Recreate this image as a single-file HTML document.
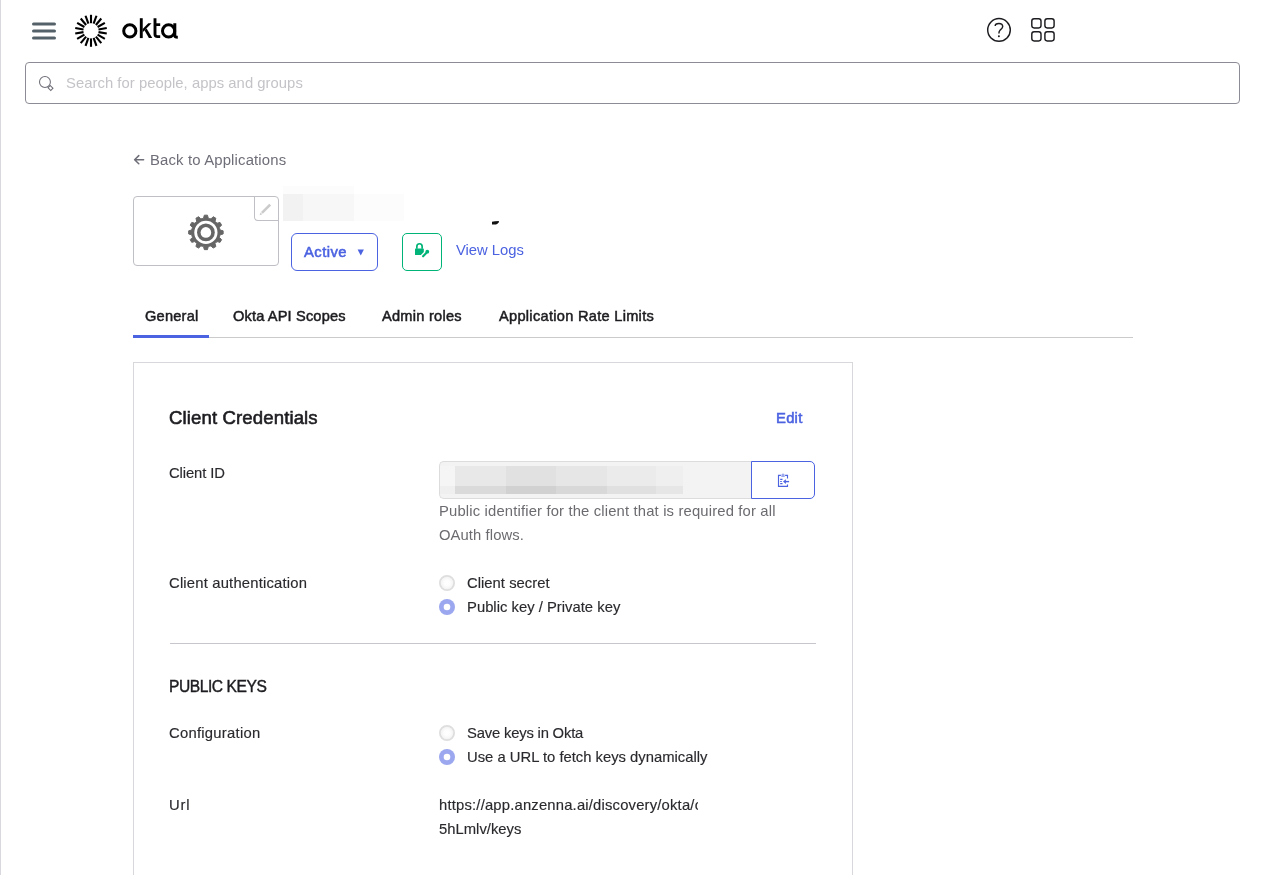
<!DOCTYPE html>
<html><head><meta charset="utf-8"><title>Okta - Application</title>
<style>
html,body{margin:0;padding:0;background:#fff;}
body{width:1264px;height:875px;overflow:hidden;position:relative;font-family:"Liberation Sans", sans-serif;}
.t{position:absolute;white-space:nowrap;will-change:transform;}
svg.ic{position:absolute;left:0;top:0;width:1264px;height:875px;pointer-events:none;}
</style></head><body>
<div style="position:absolute;left:0px;top:0px;width:1px;height:875px;background:#d8d8de"></div>
<div style="position:absolute;left:25px;top:62px;width:1215px;height:42px;box-sizing:border-box;border:1px solid #8c8c96;border-radius:4px;background:#fff"></div>
<div style="position:absolute;left:133px;top:196px;width:146px;height:70px;box-sizing:border-box;border:1px solid #bfbfc6;border-radius:4px;background:#fff"></div>
<div style="position:absolute;left:254px;top:197px;width:24px;height:24px;box-sizing:border-box;border:1px solid #bfbfc6;border-top:none;border-right:none;border-bottom-left-radius:4px;background:transparent"></div>
<div style="position:absolute;left:283px;top:186px;width:71px;height:8px;background:#fcfcfc"></div>
<div style="position:absolute;left:283px;top:194px;width:20px;height:27px;background:#f2f2f2"></div>
<div style="position:absolute;left:303px;top:194px;width:51px;height:27px;background:#f7f7f7"></div>
<div style="position:absolute;left:354px;top:194px;width:50px;height:27px;background:#fcfcfc"></div>
<div style="position:absolute;left:291px;top:233px;width:87px;height:38px;box-sizing:border-box;border:1px solid #4b62e1;border-radius:6px;background:#fff"></div>
<div style="position:absolute;left:402px;top:233px;width:40px;height:38px;box-sizing:border-box;border:1px solid #00b378;border-radius:5px;background:#fff"></div>
<div style="position:absolute;left:133px;top:337px;width:1000px;height:1px;background:#cbcbcb"></div>
<div style="position:absolute;left:133px;top:335px;width:76px;height:3px;background:#4b62e1"></div>
<div style="position:absolute;left:133px;top:362px;width:720px;height:600px;box-sizing:border-box;border:1px solid #d7d7dc;background:#fff"></div>
<div style="position:absolute;left:439px;top:461px;width:313px;height:38px;box-sizing:border-box;border:1px solid #dcdcdc;border-right:none;border-radius:5px 0 0 5px;background:#f3f3f3"></div>
<div style="position:absolute;left:440px;top:466px;width:15px;height:20px;background:#f5f5f5"></div>
<div style="position:absolute;left:440px;top:486px;width:15px;height:8px;background:#efefef"></div>
<div style="position:absolute;left:455px;top:466px;width:51px;height:20px;background:#e8e8e8"></div>
<div style="position:absolute;left:455px;top:486px;width:51px;height:8px;background:#dadada"></div>
<div style="position:absolute;left:506px;top:466px;width:50px;height:20px;background:#e1e1e1"></div>
<div style="position:absolute;left:506px;top:486px;width:50px;height:8px;background:#d1d1d1"></div>
<div style="position:absolute;left:556px;top:466px;width:51px;height:20px;background:#e6e6e6"></div>
<div style="position:absolute;left:556px;top:486px;width:51px;height:8px;background:#d8d8d8"></div>
<div style="position:absolute;left:607px;top:466px;width:49px;height:20px;background:#ebebeb"></div>
<div style="position:absolute;left:607px;top:486px;width:49px;height:8px;background:#e0e0e0"></div>
<div style="position:absolute;left:656px;top:466px;width:27px;height:20px;background:#efefef"></div>
<div style="position:absolute;left:656px;top:486px;width:27px;height:8px;background:#e6e6e6"></div>
<div style="position:absolute;left:751px;top:461px;width:64px;height:38px;box-sizing:border-box;border:1px solid #4b62e1;border-radius:0 5px 5px 0;background:#fff"></div>
<div style="position:absolute;left:170px;top:643px;width:646px;height:1px;background:#c6c6cc"></div>
<div class="t" style="left:65.58px;top:76px;font-size:14.8px;line-height:14.8px;font-weight:400;color:#c4c4c8;letter-spacing:0.046px;">Search for people, apps and groups</div>
<div class="t" style="left:149.56px;top:153px;font-size:14.9px;line-height:14.9px;font-weight:400;color:#6e6e78;letter-spacing:0.15px;">Back to Applications</div>
<div class="t" style="left:303.88px;top:245px;font-size:14.8px;line-height:14.8px;font-weight:400;color:#4b62e1;letter-spacing:0.431px;-webkit-text-stroke:0.55px #4b62e1;">Active</div>
<div class="t" style="left:455.51px;top:243px;font-size:14.8px;line-height:14.8px;font-weight:400;color:#4b62e1;letter-spacing:-0.012px;">View Logs</div>
<div class="t" style="left:144.68px;top:309px;font-size:14.6px;line-height:14.6px;font-weight:400;color:#1d1d21;letter-spacing:0.224px;-webkit-text-stroke:0.5px #1d1d21;">General</div>
<div class="t" style="left:233.32px;top:309px;font-size:14.6px;line-height:14.6px;font-weight:400;color:#1d1d21;letter-spacing:0.153px;-webkit-text-stroke:0.5px #1d1d21;">Okta API Scopes</div>
<div class="t" style="left:382.09px;top:309px;font-size:14.6px;line-height:14.6px;font-weight:400;color:#1d1d21;letter-spacing:0.251px;-webkit-text-stroke:0.5px #1d1d21;">Admin roles</div>
<div class="t" style="left:498.69px;top:309px;font-size:14.6px;line-height:14.6px;font-weight:400;color:#1d1d21;letter-spacing:0.289px;-webkit-text-stroke:0.5px #1d1d21;">Application Rate Limits</div>
<div class="t" style="left:169.46px;top:409px;font-size:18.6px;line-height:18.6px;font-weight:400;color:#1d1d21;letter-spacing:0.111px;-webkit-text-stroke:0.6px #1d1d21;">Client Credentials</div>
<div class="t" style="left:775.95px;top:411px;font-size:14.8px;line-height:14.8px;font-weight:400;color:#4b62e1;letter-spacing:0.256px;-webkit-text-stroke:0.55px #4b62e1;">Edit</div>
<div class="t" style="left:169.43px;top:466px;font-size:14.8px;line-height:14.8px;font-weight:400;color:#2a2a2e;letter-spacing:-0.092px;-webkit-text-stroke:0.15px #2a2a2e;">Client ID</div>
<div class="t" style="left:438.56px;top:504px;font-size:14.8px;line-height:14.8px;font-weight:400;color:#6b6b70;letter-spacing:0.163px;">Public identifier for the client that is required for all</div>
<div class="t" style="left:439.05px;top:528px;font-size:14.8px;line-height:14.8px;font-weight:400;color:#6b6b70;letter-spacing:0.086px;">OAuth flows.</div>
<div class="t" style="left:169.43px;top:576px;font-size:14.8px;line-height:14.8px;font-weight:400;color:#2a2a2e;letter-spacing:0.19px;-webkit-text-stroke:0.15px #2a2a2e;">Client authentication</div>
<div class="t" style="left:467.13px;top:576px;font-size:14.8px;line-height:14.8px;font-weight:400;color:#2a2a2e;letter-spacing:0.031px;-webkit-text-stroke:0.15px #2a2a2e;">Client secret</div>
<div class="t" style="left:466.60px;top:600px;font-size:14.8px;line-height:14.8px;font-weight:400;color:#2a2a2e;letter-spacing:0.014px;-webkit-text-stroke:0.15px #2a2a2e;">Public key / Private key</div>
<div class="t" style="left:168.95px;top:679px;font-size:15.6px;line-height:15.6px;font-weight:400;color:#1d1d21;letter-spacing:-0.446px;-webkit-text-stroke:0.4px #1d1d21;">PUBLIC KEYS</div>
<div class="t" style="left:168.63px;top:726px;font-size:14.8px;line-height:14.8px;font-weight:400;color:#2a2a2e;letter-spacing:0.262px;-webkit-text-stroke:0.15px #2a2a2e;">Configuration</div>
<div class="t" style="left:467.07px;top:726px;font-size:14.8px;line-height:14.8px;font-weight:400;color:#2a2a2e;letter-spacing:-0.185px;-webkit-text-stroke:0.15px #2a2a2e;">Save keys in Okta</div>
<div class="t" style="left:466.76px;top:750px;font-size:14.8px;line-height:14.8px;font-weight:400;color:#2a2a2e;letter-spacing:0.0px;-webkit-text-stroke:0.15px #2a2a2e;">Use a URL to fetch keys dynamically</div>
<div class="t" style="left:168.86px;top:798px;font-size:14.8px;line-height:14.8px;font-weight:400;color:#2a2a2e;letter-spacing:0.767px;-webkit-text-stroke:0.15px #2a2a2e;">Url</div>
<div class="t" style="left:438.65px;top:798px;font-size:14.8px;line-height:14.8px;font-weight:400;color:#2a2a2e;letter-spacing:0.19px;-webkit-text-stroke:0.15px #2a2a2e;width:259.35px;overflow:hidden;">https://app.anzenna.ai/discovery/okta/client</div>
<div class="t" style="left:438.84px;top:822px;font-size:14.8px;line-height:14.8px;font-weight:400;color:#2a2a2e;letter-spacing:0.018px;-webkit-text-stroke:0.15px #2a2a2e;">5hLmlv/keys</div>
<svg class="ic" width="1264" height="875" viewBox="0 0 1264 875">
<defs><radialGradient id="rg"><stop offset="0" stop-color="#ffffff"/><stop offset="0.4" stop-color="#fdfdfd"/><stop offset="1" stop-color="#f0f0f0"/></radialGradient></defs>
<line x1="33.5" y1="24" x2="54.5" y2="24" stroke="#546168" stroke-width="3" stroke-linecap="round"/>
<line x1="33.5" y1="31" x2="54.5" y2="31" stroke="#546168" stroke-width="3" stroke-linecap="round"/>
<line x1="33.5" y1="38" x2="54.5" y2="38" stroke="#546168" stroke-width="3" stroke-linecap="round"/>
<line x1="91.00" y1="23.20" x2="91.00" y2="14.80" stroke="#000" stroke-width="2.1"/>
<line x1="93.60" y1="23.66" x2="96.47" y2="15.76" stroke="#000" stroke-width="2.1"/>
<line x1="95.89" y1="24.98" x2="101.28" y2="18.54" stroke="#000" stroke-width="2.1"/>
<line x1="97.58" y1="27.00" x2="104.86" y2="22.80" stroke="#000" stroke-width="2.1"/>
<line x1="98.48" y1="29.48" x2="106.76" y2="28.02" stroke="#000" stroke-width="2.1"/>
<line x1="98.48" y1="32.12" x2="106.76" y2="33.58" stroke="#000" stroke-width="2.1"/>
<line x1="97.58" y1="34.60" x2="104.86" y2="38.80" stroke="#000" stroke-width="2.1"/>
<line x1="95.89" y1="36.62" x2="101.28" y2="43.06" stroke="#000" stroke-width="2.1"/>
<line x1="93.60" y1="37.94" x2="96.47" y2="45.84" stroke="#000" stroke-width="2.1"/>
<line x1="91.00" y1="38.40" x2="91.00" y2="46.80" stroke="#000" stroke-width="2.1"/>
<line x1="88.40" y1="37.94" x2="85.53" y2="45.84" stroke="#000" stroke-width="2.1"/>
<line x1="86.11" y1="36.62" x2="80.72" y2="43.06" stroke="#000" stroke-width="2.1"/>
<line x1="84.42" y1="34.60" x2="77.14" y2="38.80" stroke="#000" stroke-width="2.1"/>
<line x1="83.52" y1="32.12" x2="75.24" y2="33.58" stroke="#000" stroke-width="2.1"/>
<line x1="83.52" y1="29.48" x2="75.24" y2="28.02" stroke="#000" stroke-width="2.1"/>
<line x1="84.42" y1="27.00" x2="77.14" y2="22.80" stroke="#000" stroke-width="2.1"/>
<line x1="86.11" y1="24.98" x2="80.72" y2="18.54" stroke="#000" stroke-width="2.1"/>
<line x1="88.40" y1="23.66" x2="85.53" y2="15.76" stroke="#000" stroke-width="2.1"/>
<g fill="none" stroke="#000" stroke-width="3"><circle cx="129.8" cy="30.9" r="6.1"/><path d="M141.28 18.2V38.1" stroke-width="2.9"/><path d="M142.7 28.9L148.3 23.3H151.5L142.7 32.3Z" fill="#000" stroke="none"/><path d="M144.4 30.3L146.6 28.6L152.3 38.1H148.9Z" fill="#000" stroke="none"/><path d="M155 18.2V34.3Q155 36.65 157.6 36.65H160.2" stroke-width="2.9"/><path d="M155 24.65H160.2" stroke-width="2.7"/><circle cx="168.6" cy="30.9" r="6.1"/><path d="M174.8 23.3V35.5Q174.8 37.2 177.8 37.2"/></g>
<g fill="none" stroke="#1d1d21" stroke-width="1.45"><circle cx="999" cy="29.9" r="11.3"/><path d="M995.2 26C995.2 24.4 996.8 23.5 998.9 23.5C1001 23.5 1002.7 24.8 1002.7 26.6C1002.7 28.4 1001.2 29.2 1000.2 30C999.3 30.7 998.9 31.5 998.9 33.6"/></g><circle cx="998.9" cy="36.3" r="1" fill="#1d1d21"/>
<g fill="none" stroke="#1d1d21" stroke-width="1.45">
<rect x="1031.8" y="18.7" width="9.2" height="9.2" rx="2.3"/>
<rect x="1031.8" y="31.7" width="9.2" height="9.2" rx="2.3"/>
<rect x="1044.9" y="18.7" width="9.2" height="9.2" rx="2.3"/>
<rect x="1044.9" y="31.7" width="9.2" height="9.2" rx="2.3"/>
</g>
<g fill="none" stroke="#6e6e78" stroke-width="1.05"><circle cx="44.95" cy="81.95" r="5.45"/><rect x="-1.55" y="0" width="3.1" height="3.9" transform="translate(49.1 86.6) rotate(-45)"/></g>
<g fill="none" stroke="#6e6e78" stroke-width="1.5" stroke-linecap="round" stroke-linejoin="round"><path d="M143.6 159.7H134.6M138.8 155.6L134.6 159.7L138.8 163.8"/></g>
<g transform="translate(0.3 0.5)"><path d="M261.6 212.4L269.9 204.1" stroke="#cbcbcb" stroke-width="2.6"/><path d="M259.3 214.7L261.99 213.85L260.15 212.01Z" fill="#cbcbcb"/></g>
<path d="M202.20 218.59L203.52 218.20L204.33 215.17L207.47 215.17L208.28 218.20L209.60 218.59L210.94 218.91L213.16 216.70L215.87 218.26L215.06 221.29L216.01 222.29L217.01 223.24L220.04 222.43L221.60 225.14L219.39 227.36L219.71 228.70L220.10 230.02L223.13 230.83L223.13 233.97L220.10 234.78L219.71 236.10L219.39 237.44L221.60 239.66L220.04 242.37L217.01 241.56L216.01 242.51L215.06 243.51L215.87 246.54L213.16 248.10L210.94 245.89L209.60 246.21L208.28 246.60L207.47 249.63L204.33 249.63L203.52 246.60L202.20 246.21L200.86 245.89L198.64 248.10L195.93 246.54L196.74 243.51L195.79 242.51L194.79 241.56L191.76 242.37L190.20 239.66L192.41 237.44L192.09 236.10L191.70 234.78L188.67 233.97L188.67 230.83L191.70 230.02L192.09 228.70L192.41 227.36L190.20 225.14L191.76 222.43L194.79 223.24L195.79 222.29L196.74 221.29L195.93 218.26L198.64 216.70L200.86 218.91Z" fill="#666" stroke="#666" stroke-width="1" stroke-linejoin="round"/>
<circle cx="205.9" cy="232.4" r="11.6" fill="#fff"/><circle cx="205.9" cy="232.4" r="8.9" fill="#666"/><circle cx="205.9" cy="232.4" r="5.3" fill="#fff"/>
<path d="M492 221.8L495 221.2L499 221L498.7 222.2L497.5 223.8L496 224.6H492Z" fill="#111"/>
<path d="M357.6 249.5H363.9L360.75 255.6Z" fill="#4b62e1"/>
<path d="M415 249.2Q415 248.6 415.6 248.6H423.2Q423.8 248.6 423.8 249.2V251.9L420.9 255H415.6Q415 255 415 254.4Z" fill="#00b378"/><path d="M416.85 248.8V246.4A2.65 2.65 0 0 1 422.15 246.4V248.8" fill="none" stroke="#00b378" stroke-width="1.7"/><path d="M423.1 256.3L426.5 252.8" stroke="#00b378" stroke-width="2.1" stroke-linecap="round"/><circle cx="427.3" cy="251.7" r="1.9" fill="#00b378"/>
<g fill="none" stroke="#4b62e1" stroke-width="1.15"><path d="M780.9 475.4H778.5V486.3H787.5V484.5M787.5 478.4V475.4H785.1"/><path d="M780.2 479.4H782.5M780.2 481.5H781.8M780.2 483.6H782.5"/><path d="M789.1 481.6H785.2" stroke-width="1.4"/></g><path d="M781.2 477L781.6 474.5Q783 472.7 784.4 474.5L784.8 477Z" fill="#4b62e1" opacity="0.55"/><path d="M783 481.6L785.9 479.2V484Z" fill="#4b62e1"/>
<circle cx="447" cy="583" r="7.15" fill="url(#rg)" stroke="#dedede" stroke-width="1.7"/>
<circle cx="447" cy="607" r="8" fill="#9ba7ef"/><circle cx="447" cy="607" r="3.3" fill="#fff"/>
<circle cx="447" cy="733" r="7.15" fill="url(#rg)" stroke="#dedede" stroke-width="1.7"/>
<circle cx="447" cy="757" r="8" fill="#9ba7ef"/><circle cx="447" cy="757" r="3.3" fill="#fff"/>
</svg>
</body></html>
